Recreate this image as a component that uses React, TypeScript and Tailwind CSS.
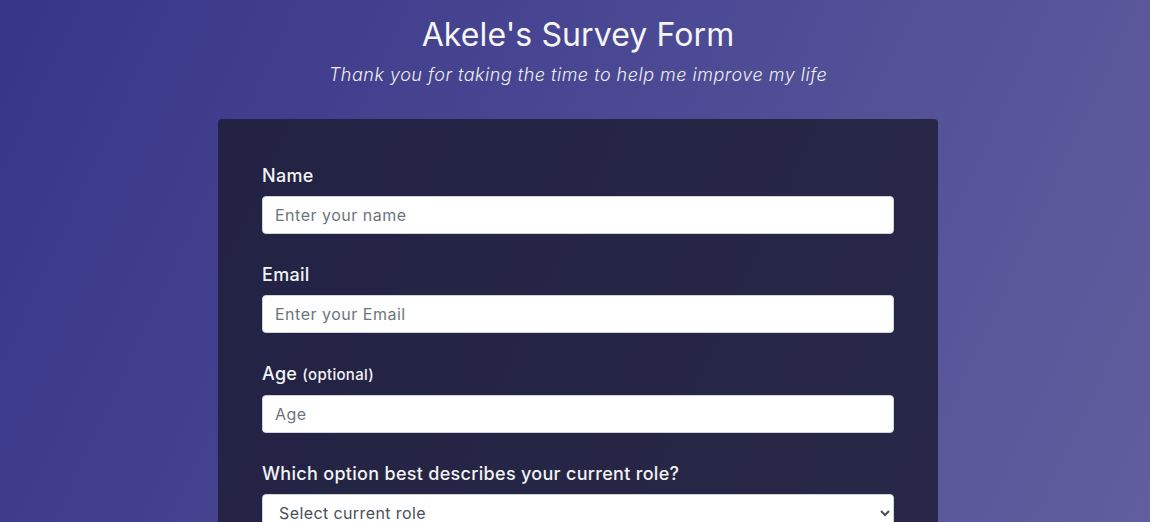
export default function App() {
  const font = { fontFamily: 'Inter, "Noto Sans", sans-serif' };
  const inputCls =
    'block h-[38px] w-full rounded border border-[#ced4da] bg-white px-3 text-[16px] tracking-[0.5px] text-[#495057] placeholder-[#6c757d] focus:outline-none';
  const labelCls = 'mb-2 block text-[18px] leading-[25px] font-medium tracking-[0.3px]';

  return (
    <div
      style={font}
      className="min-h-screen bg-[linear-gradient(115deg,#373587_0%,#4a4893_45%,#625f9f_100%)] pl-[6px] text-[#f3f3f3]"
    >
      <header className="pt-4 text-center">
        <h1 className="text-[32px] leading-[38px] font-normal tracking-[0.1px] text-[#f5f5f5]">
          Akele's Survey Form
        </h1>
        <p className="mt-2 text-[18px] leading-[25px] font-light italic tracking-[0.5px] text-[#eeeeee]">
          Thank you for taking the time to help me improve my life
        </p>
      </header>

      <main className="mx-auto mt-8 w-[720px] rounded bg-[rgba(27,27,50,0.8)] px-11 pt-10 pb-10">
        <form>
          <div className="mb-5 py-1">
            <label className={labelCls}>Name</label>
            <input placeholder="Enter your name" className={inputCls} />
          </div>

          <div className="mb-5 py-1">
            <label className={labelCls}>Email</label>
            <input placeholder="Enter your Email" className={inputCls} />
          </div>

          <div className="mb-5 py-1">
            <label className={labelCls}>
              Age <span className="text-[15px]">(optional)</span>
            </label>
            <input placeholder="Age" className={inputCls} />
          </div>

          <div className="mb-5 py-1">
            <label className={labelCls}>Which option best describes your current role?</label>
            <select
              defaultValue=""
              className="block h-[38px] w-full rounded border border-[#ced4da] bg-white px-3 text-[16px] tracking-[0.4px] text-[#495057]"
            >
              <option value="" disabled>
                Select current role
              </option>
              <option>Student</option>
              <option>Full Time Job</option>
              <option>Full Time Learner</option>
              <option>Prefer not to say</option>
              <option>Other</option>
            </select>
          </div>
        </form>
      </main>
    </div>
  );
}
